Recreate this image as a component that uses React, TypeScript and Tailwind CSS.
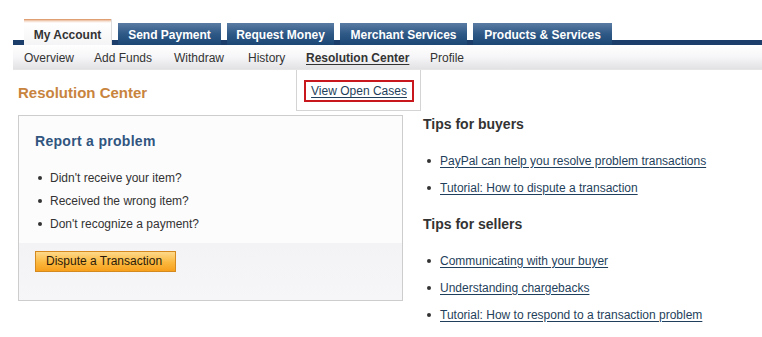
import React from "react";

const tabs = [
  { label: "Send Payment", w: "w-[103px]" },
  { label: "Request Money", w: "w-[107px]" },
  { label: "Merchant Services", w: "w-[127px]" },
  { label: "Products & Services", w: "w-[139px]" },
];
const subnav = [
  { label: "Overview", w: "w-[70px]" },
  { label: "Add Funds", w: "w-[80px]" },
  { label: "Withdraw", w: "w-[74px]" },
  { label: "History", w: "w-[58px]" },
  { label: "Resolution Center", w: "w-[124px]" },
  { label: "Profile", w: "w-[40px]" },
];
const problems = ["Didn't receive your item?", "Received the wrong item?", "Don't recognize a payment?"];
const buyerTips = ["PayPal can help you resolve problem transactions", "Tutorial: How to dispute a transaction"];
const sellerTips = [
  "Communicating with your buyer",
  "Understanding chargebacks",
  "Tutorial: How to respond to a transaction problem",
];

const Dot = () => <span className="inline-block w-[4px] h-[4px] rounded-full bg-[#333] shrink-0" />;

const TipList = ({ items }: { items: string[] }) => (
  <ul>
    {items.map((t) => (
      <li key={t} className="flex items-center h-[27px] pl-[4px]">
        <Dot />
        <a href="#" className="ml-[9px] text-[12px] text-[#1f3f5c] underline underline-offset-[2px]">
          {t}
        </a>
      </li>
    ))}
  </ul>
);

export default function App() {
  return (
    <div className="relative w-[762px] h-[337px] overflow-hidden bg-white font-['Liberation_Sans',Arial,sans-serif] text-[#333]">
      {/* top tabs */}
      <div className="mt-[19px] ml-[13px] h-[26px] pl-[11px] flex items-end gap-[6px] bg-[linear-gradient(to_bottom,transparent_21px,#1b3f6a_21px)]">
        <div className="w-[88px] h-[26px] pt-[5px] flex items-center justify-center text-[12px] font-bold text-[#333] border-r border-[#dcdcdc] bg-[linear-gradient(to_bottom,#d98a57_0px,#f3d9c8_2px,#ffffff_4px,#f4f4f6_100%)]">
          My Account
        </div>
        {tabs.map((t) => (
          <div
            key={t.label}
            className={`${t.w} h-[22px] pt-[1px] flex items-center justify-center text-[12px] font-bold text-white bg-[linear-gradient(to_bottom,#5a7ca3,#2e5886_50%,#1c4674)]`}
          >
            {t.label}
          </div>
        ))}
      </div>

      {/* sub nav */}
      <div className="relative ml-[13px] h-[25px] pl-[11px] pt-[2px] flex items-center text-[12px] text-[#333] bg-[linear-gradient(to_bottom,#ffffff,#f6f6f8_50%,#e2e2e5)] border-b border-[#e6e6e6]">
        {subnav.map((s) =>
          s.label === "Resolution Center" ? (
            <span key={s.label} className={`${s.w} font-bold underline underline-offset-[2px]`}>
              {s.label}
            </span>
          ) : (
            <span key={s.label} className={s.w}>
              {s.label}
            </span>
          )
        )}
        <div className="absolute left-[283px] top-[25px] w-[125px] h-[41px] bg-white border-x border-b border-[#d4d4d4] z-10">
          <div className="ml-[7px] mt-[10px] w-[110px] h-[22px] border-2 border-[#c8181e] flex items-center justify-center">
            <a href="#" className="text-[12px] text-[#1f3f5c] underline underline-offset-[2px]">
              View Open Cases
            </a>
          </div>
        </div>
      </div>

      {/* page title */}
      <div className="mt-[14px] ml-[18px] h-[18px] leading-[18px] text-[15px] font-bold text-[#c8843e]">
        Resolution Center
      </div>

      <div className="mt-[13px] ml-[18px] flex gap-[20px]">
        {/* report card */}
        <div className="w-[385px] h-[186px] border border-[#cdcdcd] flex flex-col">
          <div className="bg-[#fdfcfd] pl-[16px] pt-[17px] pb-[8px]">
            <div className="text-[14px] leading-[16px] font-bold tracking-[0.3px] text-[#30557f]">Report a problem</div>
            <ul className="mt-[17px]">
              {problems.map((p) => (
                <li key={p} className="flex items-center h-[23px] pl-[3px]">
                  <Dot />
                  <span className="ml-[8px] text-[12px] text-[#333]">{p}</span>
                </li>
              ))}
            </ul>
          </div>
          <div className="flex-1 bg-[linear-gradient(to_bottom,#f3f2f4,#f6f5f7)] pl-[16px] pt-[8px]">
            <button className="block h-[21px] w-[141px] text-left pl-[10px] text-[12px] leading-[19px] text-[#2a1a0a] border border-[#d48a1e] bg-[linear-gradient(to_bottom,#fed98a,#fbb83e_55%,#f7a01c)]">
              Dispute a Transaction
            </button>
          </div>
        </div>

        {/* tips */}
        <div className="pt-[1px]">
          <div className="text-[14px] leading-[16px] font-bold text-[#333]">Tips for buyers</div>
          <div className="mt-[15px]">
            <TipList items={buyerTips} />
          </div>
          <div className="mt-[15px] text-[14px] leading-[16px] font-bold text-[#333]">Tips for sellers</div>
          <div className="mt-[15px]">
            <TipList items={sellerTips} />
          </div>
        </div>
      </div>
    </div>
  );
}
